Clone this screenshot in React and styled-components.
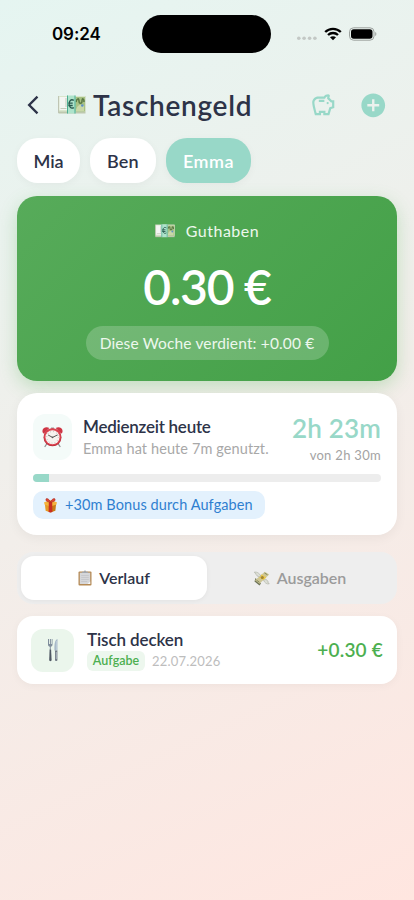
import styled, { createGlobalStyle } from "styled-components";
import { MdAddCircle, MdArrowBackIosNew, MdOutlineSavings } from "react-icons/md";

const GlobalStyle = createGlobalStyle`
  * {
    box-sizing: border-box;
  }
  body {
    margin: 0;
    font-family: Lato, "Noto Sans", sans-serif;
    color: #2d3348;
  }
`;

const Screen = styled.div`
  width: 414px;
  height: 900px;
  overflow: hidden;
  display: flex;
  flex-direction: column;
  background: linear-gradient(155deg, #e5f5f1 0%, #f2eeea 50%, #ffe6e0 100%);
`;

const Text = styled.span`
  display: block;
  white-space: nowrap;
  font-size: ${({ $size }) => $size}px;
  font-weight: ${({ $weight }) => $weight || 400};
  line-height: ${({ $line }) => $line}px;
  letter-spacing: ${({ $spacing }) => $spacing || 0}px;
  color: ${({ $color }) => $color || "inherit"};
`;

const StatusBar = styled.div`
  height: 68px;
  display: flex;
  align-items: center;
  padding: 0 37px 0 52px;
`;

const Clock = styled.div`
  width: 90px;
  font-family: Inter, sans-serif;
  font-size: 17px;
  font-weight: 600;
  letter-spacing: -0.1px;
  color: #000;
`;

const Island = styled.div`
  width: 129px;
  height: 38px;
  border-radius: 19px;
  background: #000;
`;

const StatusIcons = styled.div`
  margin-left: auto;
  display: flex;
  align-items: center;
  gap: 7px;
  svg {
    display: block;
  }
`;

const Header = styled.div`
  height: 70px;
  display: flex;
  align-items: center;
  padding: 4px 27px 0 22px;
`;

const BackButton = styled.div`
  width: 36px;
  display: flex;
`;

const Title = styled.div`
  display: flex;
  align-items: center;
  gap: 7px;
  flex: 1;
  padding-bottom: 1px;
`;

const Actions = styled.div`
  display: flex;
  align-items: center;
  gap: 22px;
  color: #98d8c8;
`;

const Chips = styled.div`
  display: flex;
  gap: 10px;
  padding: 0 17px;
`;

const Chip = styled.div`
  width: ${({ $width }) => $width}px;
  height: 45px;
  border-radius: 21px;
  display: flex;
  align-items: center;
  justify-content: center;
  background: ${({ $active }) => ($active ? "#98d8c8" : "#fff")};
  color: ${({ $active }) => ($active ? "#fff" : "#2d3348")};
  box-shadow: 0 2px 8px rgba(0, 0, 0, 0.04);
`;

const Balance = styled.div`
  margin: 13px 17px 0;
  height: 185px;
  padding-top: 23px;
  border-radius: 20px;
  display: flex;
  flex-direction: column;
  align-items: center;
  color: #fff;
  background: linear-gradient(135deg, #57ab5a 0%, #43a047 100%);
  box-shadow: 0 6px 18px rgba(76, 175, 80, 0.28);
`;

const BalanceLabel = styled.div`
  display: flex;
  align-items: center;
  gap: 11px;
  height: 24px;
`;

const Amount = styled.div`
  margin-top: 11px;
  font-size: 48px;
  font-weight: 600;
  line-height: 66px;
  letter-spacing: -1.2px;
`;

const Earned = styled.div`
  margin-top: 6px;
  width: 243px;
  height: 34px;
  border-radius: 17px;
  display: flex;
  align-items: center;
  justify-content: center;
  background: rgba(255, 255, 255, 0.2);
`;

const MediaCard = styled.div`
  margin: 12px 17px 0;
  height: 142px;
  padding: 16px 16px 0;
  border-radius: 20px;
  background: #fff;
  box-shadow: 0 3px 12px rgba(0, 0, 0, 0.05);
`;

const MediaTop = styled.div`
  display: flex;
  height: 65px;
`;

const Tile = styled.div`
  flex: none;
  width: ${({ $width }) => $width}px;
  height: ${({ $height }) => $height}px;
  border-radius: 12px;
  display: flex;
  align-items: center;
  justify-content: center;
  background: ${({ $color }) => $color};
`;

const MediaTile = styled(Tile)`
  margin-top: 5px;
`;

const MediaText = styled.div`
  padding: 7px 0 0 11px;
  flex: 1;
`;

const MediaTime = styled.div`
  padding-top: 3px;
  display: flex;
  flex-direction: column;
  align-items: flex-end;
`;

const Track = styled.div`
  height: 8px;
  border-radius: 4px;
  overflow: hidden;
  background: #ededed;
`;

const Fill = styled.div`
  height: 100%;
  background: #98d8c8;
`;

const Bonus = styled.div`
  margin-top: 9px;
  width: 232px;
  height: 28px;
  padding-left: 10px;
  border-radius: 10px;
  display: flex;
  align-items: center;
  gap: 7px;
  background: #e3f1fd;
`;

const Tabs = styled.div`
  margin: 17px 17px 0;
  height: 52px;
  padding: 4px;
  border-radius: 16px;
  display: flex;
  background: #eeeeee;
`;

const Tab = styled.div`
  flex: 1;
  display: flex;
  align-items: center;
  justify-content: center;
  gap: 7px;
  border-radius: 13px;
  color: ${({ $active }) => ($active ? "#2d3348" : "#9b9b9b")};
  background: ${({ $active }) => ($active ? "#fff" : "transparent")};
  box-shadow: ${({ $active }) => ($active ? "0 1px 5px rgba(0, 0, 0, 0.05)" : "none")};
`;

const Entry = styled.div`
  margin: 12px 17px 0;
  height: 68px;
  padding: 0 14px;
  border-radius: 16px;
  display: flex;
  align-items: center;
  background: #fff;
  box-shadow: 0 2px 9px rgba(0, 0, 0, 0.04);
`;

const EntryText = styled.div`
  flex: 1;
  padding: 0 0 2px 13px;
`;

const Meta = styled.div`
  display: flex;
  align-items: center;
  gap: 7px;
`;

const Badge = styled.div`
  width: 58px;
  height: 20px;
  border-radius: 6px;
  display: flex;
  align-items: center;
  justify-content: center;
  background: #edf7ee;
`;

const Banknote = ({ width, height }) => (
  <svg width={width} height={height} viewBox="0 0 28 19">
    <rect x="0.5" y="1" width="27" height="17.5" fill="#bdc8ae" />
    <rect x="0.5" y="1" width="27" height="15.5" fill="#d9e6cd" />
    <rect x="1.5" y="2" width="8" height="13" fill="#f4f5f3" />
    <path d="M0.5 1v17M2.5 13.5h6M8 3v9" stroke="#b9beac" strokeWidth="0.8" fill="none" />
    <rect x="17" y="2" width="10" height="14.5" fill="#a8c284" />
    <path d="M18 7c1-4 3-4 3-1s3 3 3 0 2-3 2 1" stroke="#5a7946" strokeWidth="1.5" fill="none" />
    <path d="M18 15c1-5 4-6 8-5v6h-8z" fill="#c9d8a8" />
    <circle cx="24.3" cy="10.5" r="1.3" fill="#5f91c6" />
    <rect x="9" y="0.5" width="8.5" height="18" fill="#aee3cb" />
    <path d="M9.5 0.5v18M17 0.5v18" stroke="#4dad92" strokeWidth="1" />
    <path d="M15.8 5.4c-3-1.8-4.7.8-4.7 3.7s2 5.2 4.7 3.5M10.3 8.2h4.4M10.3 10.5h4.4" stroke="#28594e" strokeWidth="1.3" fill="none" />
  </svg>
);

const AlarmClock = () => (
  <svg width="21" height="22" viewBox="0 0 21 22">
    <path d="M5 17.5l-2 3M16 17.5l2 3" stroke="#8e8f92" strokeWidth="1.3" strokeLinecap="round" />
    <path d="M9 2.5h3v-1H9z" fill="#999" />
    <path d="M.6 6.2C-.5 2.5 3.8-.2 7.3 2L2 7.6C1.3 7.4.8 7 .6 6.2zM20.4 6.2C21.5 2.5 17.2-.2 13.7 2L19 7.6c.7-.2 1.2-.6 1.4-1.4z" fill="#cf3544" />
    <circle cx="10.5" cy="11.3" r="9" fill="#b92d3b" />
    <circle cx="10.5" cy="11" r="8.5" fill="#dc4350" />
    <circle cx="10.5" cy="11.3" r="7" fill="#f7f2ef" />
    <circle cx="10.5" cy="11.3" r="5.8" fill="none" stroke="#9c9c9c" strokeWidth="0.9" strokeDasharray="0.6 2.437" />
    <path d="M6.5 9.2l4 2.2 4.7-2.3" stroke="#444" strokeWidth="0.9" fill="none" strokeLinecap="round" />
    <circle cx="10.5" cy="11.4" r="0.8" fill="#555" />
  </svg>
);

const Gift = () => (
  <svg width="15" height="15" viewBox="0 0 16 16">
    <path d="M2 6l6 2v7.5l-5.2-1.8z" fill="#e79a26" />
    <path d="M14 6L8 8v7.5l5.2-1.8z" fill="#c97b16" />
    <path d="M1.2 4.5L8 2.5l6.8 2-.4 2.5L8 9 1.6 7z" fill="#f4b43c" />
    <path d="M6.2 4.2h3.6l.2 10.6-2 .7-2-.7z" fill="#c92f22" />
    <path d="M8 4C6 .2 2.5-.5 3.2 2.3 3.5 4 6 4.3 8 4zM8 4c2-3.8 5.5-4.5 4.8-1.7C12.5 4 10 4.3 8 4z" fill="#dd4632" stroke="#a72820" strokeWidth="0.6" />
  </svg>
);

const Clipboard = () => (
  <svg width="14" height="16" viewBox="0 0 14 16">
    <rect x="0.5" y="1.5" width="13" height="14" rx="1" fill="#b58a55" />
    <rect x="1.8" y="2.7" width="10.4" height="11.3" fill="#d6d7da" />
    <path d="M3.2 5.5h7.6M3.2 7.5h7.6M3.2 9.5h7.6M3.2 11.5h6" stroke="#c0c2c6" strokeWidth="0.7" />
    <path d="M12.2 11.5V14H9.5z" fill="#f8f8f8" />
    <path d="M4 3V1.7h1.8C6 .1 8 .1 8.2 1.7H10V3z" fill="#a3a7ad" />
  </svg>
);

const FlyingMoney = () => (
  <svg width="16" height="15" viewBox="0 0 16 15">
    <path d="M1.5 7L7 12.5 5.5 14.5.5 10.5z" fill="#6e7458" />
    <path d="M1 9.2L10.8.8l4.4 2.7-9.7 9.3z" fill="#cfc795" />
    <path d="M4.8 6l2.7-2.5 4.8 3-2.8 2.7z" fill="#ecc94a" />
    <circle cx="8.3" cy="6.4" r="1.5" fill="#a08431" />
    <path d="M2.5 9.2l3 2.1M10.5 2l3 1.8" stroke="#7a825a" strokeWidth="0.9" />
    <path d="M7 5.3C5.5 2 3 .8.4 1c.2 1 .8 1.4 1.5 1.6-.5.5-.2 1.2.9 1.4-.2 1.2 1.9 2.2 4.2 1.3z" fill="#dddfd6" stroke="#a3a69b" strokeWidth="0.5" />
    <path d="M9.5 9c1.2 3.2 3.3 4.3 5.7 3.9-.1-1-.7-1.3-1.5-1.6.7-.4.6-1.2-.4-1.5.2-1.1-1.8-1.8-3.8-.8z" fill="#dddfd6" stroke="#a3a69b" strokeWidth="0.5" />
  </svg>
);

const Cutlery = () => (
  <svg width="12" height="24" viewBox="0 0 12 24">
    <path d="M1 1v5.5c0 1.5.9 2 1.8 2.2v3h1v-3C4.7 8.5 5.5 8 5.5 6.5V1h-.8v5h-.8V1h-.9v5h-.9V1z" fill="#7f8d9b" />
    <path d="M2.6 11.5h1.5L4.6 22c0 1.5-2.4 1.5-2.4 0z" fill="#4e5762" />
    <path d="M10.5 1C7.8 2 7.2 6 7.4 12.5h3.1z" fill="#a7b9c8" />
    <path d="M8 12.5h2.4V22c0 1.3-2.4 1.3-2.4 0z" fill="#727b85" />
    <path d="M9.8 3v9M9.3 14v7" stroke="#d5dfe7" strokeWidth="0.6" />
  </svg>
);

const Signal = () => (
  <svg width="20" height="14" viewBox="0 0 20 14">
    {[1.8, 7.1, 12.6, 17.9].map((x) => (
      <circle key={x} cx={x} cy="11.2" r="1.8" fill="#c3c8c5" />
    ))}
  </svg>
);

const Wifi = () => (
  <svg width="18" height="14" viewBox="0 0 18 14">
    <path d="M1.2 5C5.5.7 12.5.7 16.8 5M4 8c2.8-2.7 7.2-2.7 10 0" stroke="#000" strokeWidth="2.3" fill="none" />
    <path d="M9 13.3L6 10.3c1.7-1.5 4.3-1.5 6 0z" fill="#000" />
  </svg>
);

const Battery = () => (
  <svg width="28" height="14" viewBox="0 0 28 14">
    <rect x="0.5" y="0.8" width="24.5" height="12.4" rx="4" fill="none" stroke="#9da29f" />
    <rect x="2" y="2.3" width="21.5" height="9.4" rx="2.7" fill="#000" />
    <path d="M26.2 5v4c1.6-.6 1.6-3.4 0-4z" fill="#9da29f" />
  </svg>
);

const children = [
  { name: "Mia", width: 63, spacing: -0.1 },
  { name: "Ben", width: 66, spacing: 0.2 },
  { name: "Emma", width: 85, spacing: 0.5, active: true },
];

const usedMinutes = 7;
const totalMinutes = 150;

const App = () => {
  return (
    <>
      <GlobalStyle />
      <Screen>
        <StatusBar>
          <Clock>09:24</Clock>
          <Island />
          <StatusIcons>
            <Signal />
            <Wifi />
            <Battery />
          </StatusIcons>
        </StatusBar>

        <Header>
          <BackButton>
            <MdArrowBackIosNew size={22} />
          </BackButton>
          <Title>
            <Banknote width={28} height={19} />
            <Text $size={28} $weight={600} $line={38} $spacing={0.7}>Taschengeld</Text>
          </Title>
          <Actions>
            <MdOutlineSavings size={26.5} />
            <MdAddCircle size={28.5} />
          </Actions>
        </Header>

        <Chips>
          {children.map(({ name, width, spacing, active }) => (
            <Chip key={name} $width={width} $active={active}>
              <Text $size={18} $weight={600} $line={24} $spacing={spacing}>{name}</Text>
            </Chip>
          ))}
        </Chips>

        <Balance>
          <BalanceLabel>
            <Banknote width={20} height={13.5} />
            <Text $size={16} $line={22} $spacing={0.5} $color="#edf7ed">Guthaben</Text>
          </BalanceLabel>
          <Amount>0.30 €</Amount>
          <Earned>
            <Text $size={15.5} $line={22} $spacing={0.15} $color="#edf7ed">
              Diese Woche verdient: +0.00 €
            </Text>
          </Earned>
        </Balance>

        <MediaCard>
          <MediaTop>
            <MediaTile $width={39} $height={46} $color="#f4fbf9">
              <AlarmClock />
            </MediaTile>
            <MediaText>
              <Text $size={17} $weight={600} $line={22} $spacing={-0.25}>Medienzeit heute</Text>
              <Text $size={14.5} $line={21} $spacing={0.1} $color="#a8a8a8">
                Emma hat heute 7m genutzt.
              </Text>
            </MediaText>
            <MediaTime>
              <Text $size={26} $weight={600} $line={32} $spacing={0.2} $color="#98d8c8">2h 23m</Text>
              <Text $size={13} $line={22} $spacing={0.3} $color="#a3a3a3">von 2h 30m</Text>
            </MediaTime>
          </MediaTop>
          <Track>
            <Fill style={{ width: `${(usedMinutes / totalMinutes) * 100}%` }} />
          </Track>
          <Bonus>
            <Gift />
            <Text $size={14.5} $line={20} $spacing={0.1} $color="#2f7fd0">
              +30m Bonus durch Aufgaben
            </Text>
          </Bonus>
        </MediaCard>

        <Tabs>
          <Tab $active>
            <Clipboard />
            <Text $size={16} $weight={600} $line={22}>Verlauf</Text>
          </Tab>
          <Tab>
            <FlyingMoney />
            <Text $size={16} $weight={600} $line={22}>Ausgaben</Text>
          </Tab>
        </Tabs>

        <Entry>
          <Tile $width={43} $height={43} $color="#ebf6ec">
            <Cutlery />
          </Tile>
          <EntryText>
            <Text $size={17} $weight={600} $line={23} $spacing={-0.1}>Tisch decken</Text>
            <Meta>
              <Badge>
                <Text $size={12.5} $weight={600} $line={18} $color="#4caf50">Aufgabe</Text>
              </Badge>
              <Text $size={13} $line={18} $spacing={0.2} $color="#bdbdbd">22.07.2026</Text>
            </Meta>
          </EntryText>
          <Text $size={19} $weight={600} $line={26} $spacing={0.2} $color="#4caf50">+0.30 €</Text>
        </Entry>
      </Screen>
    </>
  );
};

export default App;
